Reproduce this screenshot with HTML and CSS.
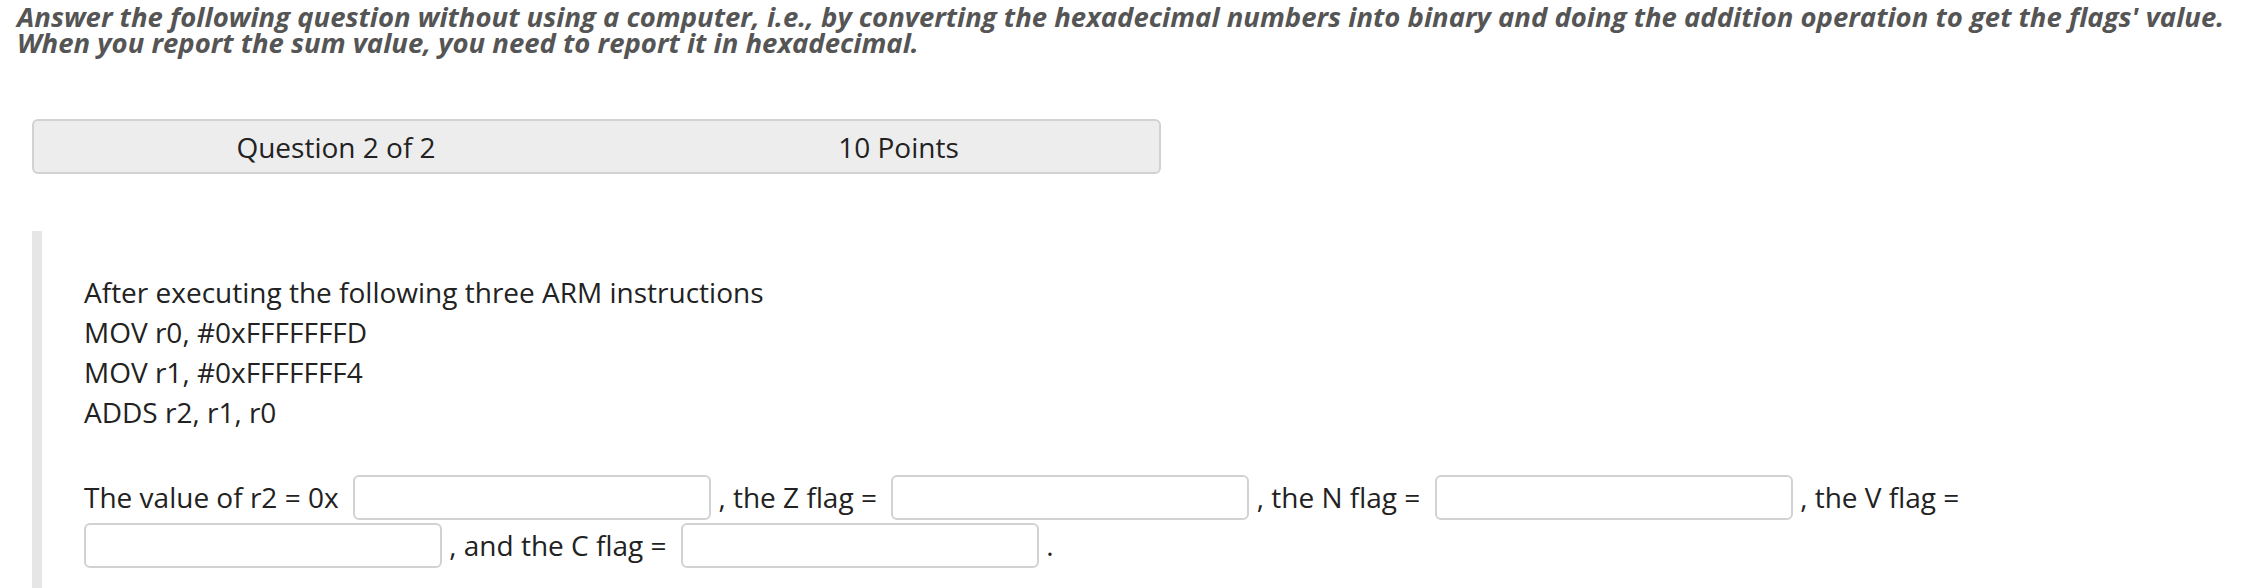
FILE: index.html
```html
<!DOCTYPE html>
<html lang="en">
<head>
<meta charset="utf-8">
<title>Question 2 of 2</title>
<link rel="stylesheet" href="styles.css">
</head>
<body>
<div class="instructions">Answer the following question without using a computer, i.e., by converting the hexadecimal numbers into binary and doing the addition operation to get the flags' value.<br>When you report the sum value, you need to report it in hexadecimal.</div>
<div class="qheader">
  <div class="qcell">Question 2 of 2</div>
  <div class="qcell">10 Points</div>
</div>
<div class="question">
  <div class="prompt">After executing the following three ARM instructions<br>MOV r0, #0xFFFFFFFD<br>MOV r1, #0xFFFFFFF4<br>ADDS r2, r1, r0</div>
  <div class="answer">The value of r2 = 0x&nbsp; <input class="blank" type="text"> , the Z flag =&nbsp; <input class="blank" type="text"> , the N flag =&nbsp; <input class="blank" type="text"> , the V flag =&nbsp; <input class="blank" type="text"> , and the C flag =&nbsp; <input class="blank" type="text"> .</div>
</div>
</body>
</html>
```
FILE: styles.css
```css
html, body {
  margin: 0;
  padding: 0;
  background: #ffffff;
}
body {
  font-family: "Open Sans", "Liberation Sans", sans-serif;
  color: #333333;
}
.instructions {
  padding: 4px 17px 0;
  font-style: italic;
  font-weight: 700;
  font-size: 27.5px;
  line-height: 26px;
  color: #555555;
  white-space: nowrap;
}
.qheader {
  margin: 63px 0 0 32px;
  width: 1129px;
  height: 55px;
  box-sizing: border-box;
  border: 2px solid #d2d2d2;
  border-radius: 6px;
  background: #ededed;
  display: grid;
  grid-template-columns: 604px 1fr;
  align-items: center;
  font-size: 28px;
  color: #222222;
}
.qcell {
  text-align: center;
}
.question {
  margin: 57px 0 0 32px;
  border-left: 10px solid #e6e6e6;
  padding: 41px 20px 40px 42px;
  font-size: 28px;
  color: #222222;
}
.prompt {
  line-height: 40px;
}
.answer {
  margin-top: 41px;
  line-height: 48px;
}
.blank {
  width: 358px;
  height: 45px;
  box-sizing: border-box;
  margin: 0;
  padding: 0 10px;
  border: 2px solid #d2d2d2;
  border-radius: 6px;
  background: #ffffff;
  font-family: "Open Sans", "Liberation Sans", sans-serif;
  font-size: 28px;
  vertical-align: baseline;
}
```
